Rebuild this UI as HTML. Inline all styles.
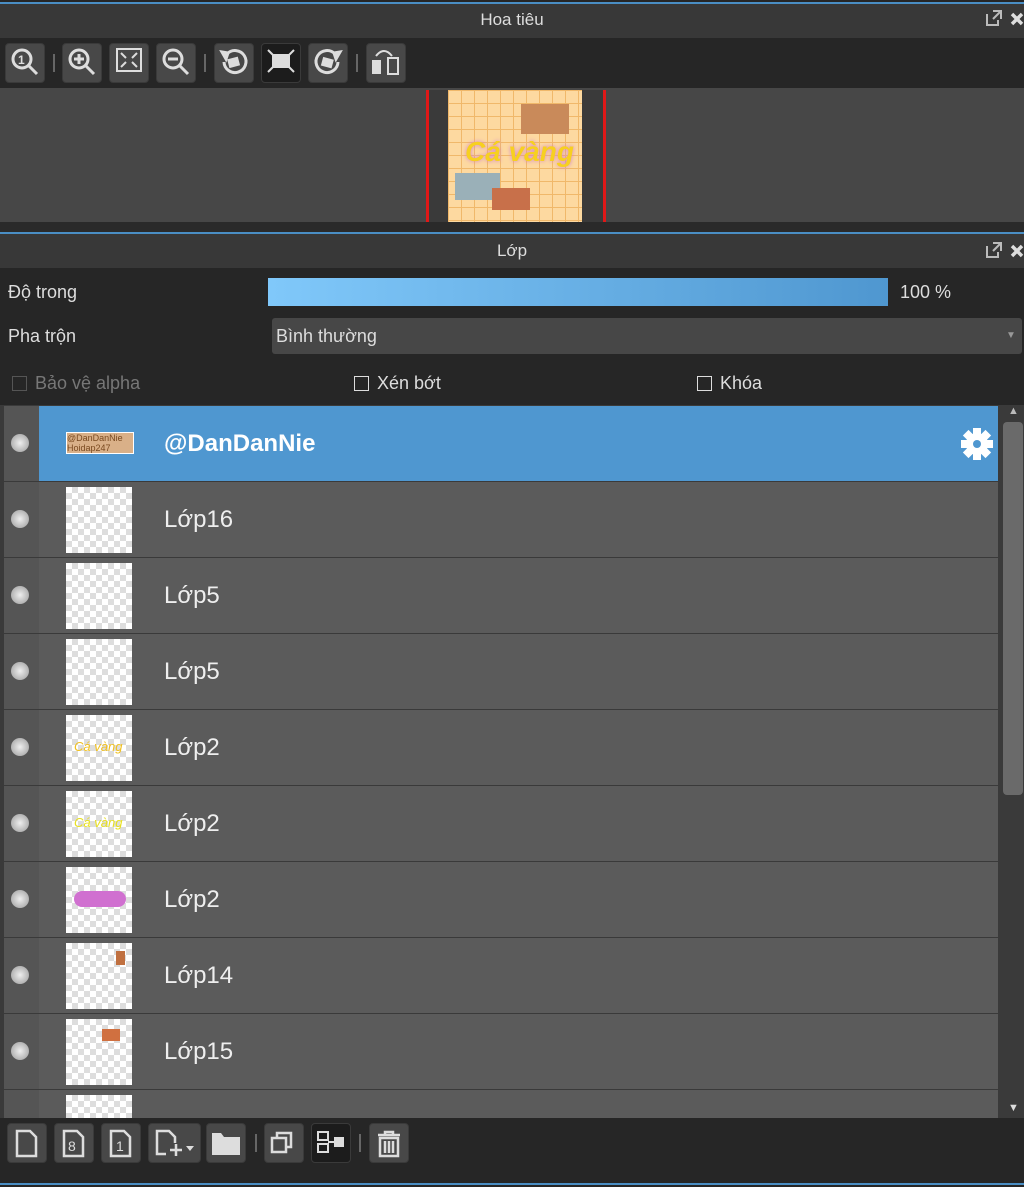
<!DOCTYPE html>
<html><head><meta charset="utf-8"><style>
*{box-sizing:border-box;margin:0;padding:0}
body{width:1024px;height:1187px;background:#262626;font-family:"Liberation Sans","DejaVu Sans",sans-serif;position:relative;overflow:hidden;color:#ddd}
.a{position:absolute}
.title{background:#383838;color:#ddd;font-size:17px;text-align:center}
.btn{position:absolute;width:40px;height:40px;background:#484848;border-radius:4px;border:1px solid #3a3a3a}
.sep{position:absolute;width:2px;height:18px;background:#666}
.row{position:absolute;left:4px;width:994px;height:75px;background:#5b5b5b}
.row .l{position:absolute;left:0;top:0;width:35px;height:75px;background:#555}
.dot{position:absolute;left:7px;top:28px;width:18px;height:18px;border-radius:50%;background:radial-gradient(#eee,#bbb 60%,#999)}
.th{position:absolute;left:62px;top:5px;width:66px;height:66px;background-color:#fff;background-image:linear-gradient(45deg,#ddd 25%,transparent 25%,transparent 75%,#ddd 75%),linear-gradient(45deg,#ddd 25%,transparent 25%,transparent 75%,#ddd 75%);background-size:12px 12px;background-position:0 0,6px 6px}
.nm{position:absolute;left:160px;top:24px;font-size:24px;color:#eee}
.cb{display:inline-block;width:15px;height:15px;border:1.5px solid #ddd;vertical-align:-2px;margin-right:8px}
</style></head><body>
<div class="a" style="left:0;top:2px;width:1024px;height:2px;background:#4a8ec4"></div>
<div class="a title" style="left:0;top:4px;width:1024px;height:34px;line-height:32px">Hoa tiêu</div>
<svg class="a" style="left:984px;top:8px" width="40" height="22" fill="none" stroke="#bbb" stroke-width="2"><path d="M3 6v11h11v-5M9 3h8v8M17 3l-8 8"/><path d="M28 6l10 10M38 6l-10 10" stroke="#ddd" stroke-width="3.5"/></svg>
<div class="a" style="left:0;top:38px;width:1024px;height:50px;background:#262626"></div>
<div class="btn" style="left:5px;top:43px"></div><div class="sep" style="left:53px;top:54px"></div>
<div class="btn" style="left:62px;top:43px"></div><div class="btn" style="left:109px;top:43px"></div><div class="btn" style="left:156px;top:43px"></div>
<div class="sep" style="left:204px;top:54px"></div>
<div class="btn" style="left:214px;top:43px"></div><div class="btn" style="left:261px;top:43px;background:#1c1c1c"></div><div class="btn" style="left:308px;top:43px"></div>
<div class="sep" style="left:356px;top:54px"></div><div class="btn" style="left:366px;top:43px"></div>
<svg class="a" style="left:0;top:38px" width="420" height="50" fill="none" stroke="#ddd" stroke-width="3">
<circle cx="22" cy="21" r="9"/><path d="M29 28l8 8"/><text x="18" y="26" font-size="12" fill="#ddd" stroke="none" font-weight="bold">1</text>
<circle cx="79" cy="21" r="9"/><path d="M86 28l8 8M74 21h10M79 16v10"/>
<rect x="117" y="11" width="24" height="22" stroke-width="2"/><path d="M121 15l5 5M137 15l-5 5M121 29l5-5M137 29l-5-5" stroke-width="2"/>
<circle cx="173" cy="21" r="9"/><path d="M180 28l8 8M168 21h10"/>
<path d="M227 16a11 11 0 1 1-3 8"/><path d="M222 14l6 1-2 6z" fill="#ddd"/><rect x="228" y="20" width="11" height="9" fill="#ddd" stroke="none" transform="rotate(-15 233 24)"/>
<rect x="272" y="16" width="18" height="14" fill="#ddd" stroke="none"/><path d="M268 12l5 5M294 12l-5 5M268 34l5-5M294 34l-5-5" stroke-width="2"/>
<path d="M335 16a11 11 0 1 0 3 8"/><path d="M340 14l-6 1 2 6z" fill="#ddd"/><rect x="322" y="20" width="11" height="9" fill="#ddd" stroke="none" transform="rotate(15 327 24)"/>
<rect x="372" y="22" width="9" height="14" fill="#ddd" stroke="none"/><rect x="388" y="20" width="10" height="16" stroke-width="2"/><path d="M376 18q8-10 16 0" stroke-width="2"/>
</svg>
<div class="a" style="left:0;top:88px;width:1024px;height:134px;background:#474747"></div>
<div class="a" style="left:426px;top:90px;width:180px;height:132px;background:#3a3a3a;border-left:3px solid #e01818;border-right:3px solid #e01818"></div>
<div class="a" style="left:448px;top:90px;width:134px;height:132px;background-color:#fdd9a0;background-image:linear-gradient(#f0b86a 1px,transparent 1px),linear-gradient(90deg,#f0b86a 1px,transparent 1px);background-size:13px 13px"></div>
<div class="a" style="left:521px;top:104px;width:48px;height:30px;background:#c98a5a"></div>
<div class="a" style="left:455px;top:173px;width:45px;height:27px;background:#9ab0b8"></div>
<div class="a" style="left:492px;top:188px;width:38px;height:22px;background:#c8704a"></div>
<div class="a" style="left:465px;top:136px;font-size:28px;font-style:italic;font-weight:bold;color:#f7d020;text-shadow:0 0 4px #d080d0">Cá vàng</div>
<div class="a" style="left:0;top:222px;width:1024px;height:10px;background:#2a2a2a"></div>
<div class="a" style="left:0;top:232px;width:1024px;height:2px;background:#4a8ec4"></div>
<div class="a title" style="left:0;top:234px;width:1024px;height:34px;line-height:34px">Lớp</div>
<svg class="a" style="left:984px;top:240px" width="40" height="22" fill="none" stroke="#bbb" stroke-width="2"><path d="M3 6v11h11v-5M9 3h8v8M17 3l-8 8"/><path d="M28 6l10 10M38 6l-10 10" stroke="#ddd" stroke-width="3.5"/></svg>
<div class="a" style="left:0;top:268px;width:1024px;height:137px;background:#262626"></div>
<div class="a" style="left:8px;top:282px;font-size:18px">Độ trong</div>
<div class="a" style="left:268px;top:278px;width:620px;height:28px;background:linear-gradient(90deg,#80c8fa,#4f97d0)"></div>
<div class="a" style="left:900px;top:282px;font-size:18px">100 %</div>
<div class="a" style="left:8px;top:326px;font-size:18px">Pha trộn</div>
<div class="a" style="left:272px;top:318px;width:750px;height:36px;background:#474747;border-radius:3px"></div>
<div class="a" style="left:276px;top:326px;font-size:18px">Bình thường</div>
<div class="a" style="left:1006px;top:330px;font-size:10px;color:#999">▼</div>
<div class="a" style="left:12px;top:373px;font-size:18px;color:#777"><span class="cb" style="border-color:#555"></span>Bảo vệ alpha</div>
<div class="a" style="left:354px;top:373px;font-size:18px"><span class="cb"></span>Xén bớt</div>
<div class="a" style="left:697px;top:373px;font-size:18px"><span class="cb"></span>Khóa</div>
<div class="a" style="left:0;top:405px;width:1000px;height:713px;background:#3a3a3a"></div>
<div class="row" style="top:406px;background:#4f97d0"><div class="l"></div><div class="dot"></div>
<div class="a" style="left:62px;top:26px;width:68px;height:22px;background:#d9b088;border:1px solid #fff;font-size:9px;color:#7a4a20;line-height:10px">@DanDanNie<br>Hoidap247</div>
<div class="nm" style="font-weight:bold;color:#fff">@DanDanNie</div>
<svg class="a" style="left:955px;top:20px" width="36" height="36" viewBox="0 0 36 36"><g fill="#fff"><circle cx="18" cy="18" r="11"/><rect x="14" y="2" width="8" height="32"/><rect x="2" y="14" width="32" height="8"/><rect x="14" y="2" width="8" height="32" transform="rotate(45 18 18)"/><rect x="14" y="2" width="8" height="32" transform="rotate(-45 18 18)"/></g><circle cx="18" cy="18" r="4" fill="#4f97d0"/></svg></div>
<div class="row" style="top:482px"><div class="l"></div><div class="dot"></div><div class="th"></div><div class="nm">Lớp16</div></div>
<div class="row" style="top:558px"><div class="l"></div><div class="dot"></div><div class="th"></div><div class="nm">Lớp5</div></div>
<div class="row" style="top:634px"><div class="l"></div><div class="dot"></div><div class="th"></div><div class="nm">Lớp5</div></div>
<div class="row" style="top:710px"><div class="l"></div><div class="dot"></div><div class="th"><div class="a" style="left:8px;top:24px;font-size:13px;font-style:italic;color:#f0c020">Cá vàng</div></div><div class="nm">Lớp2</div></div>
<div class="row" style="top:786px"><div class="l"></div><div class="dot"></div><div class="th"><div class="a" style="left:8px;top:24px;font-size:13px;font-style:italic;color:#e8e020">Cá vàng</div></div><div class="nm">Lớp2</div></div>
<div class="row" style="top:862px"><div class="l"></div><div class="dot"></div><div class="th"><div class="a" style="left:8px;top:24px;width:52px;height:16px;border-radius:8px;background:#d070d0"></div></div><div class="nm">Lớp2</div></div>
<div class="row" style="top:938px"><div class="l"></div><div class="dot"></div><div class="th"><div class="a" style="left:50px;top:8px;width:9px;height:14px;background:#c07040"></div></div><div class="nm">Lớp14</div></div>
<div class="row" style="top:1014px"><div class="l"></div><div class="dot"></div><div class="th"><div class="a" style="left:36px;top:10px;width:18px;height:12px;background:#d07040"></div></div><div class="nm">Lớp15</div></div>
<div class="row" style="top:1090px;height:28px"><div class="l" style="height:28px"></div><div class="th" style="height:23px"></div></div>
<div class="a" style="left:1000px;top:405px;width:24px;height:713px;background:#3a3a3a"></div>
<div class="a" style="left:1003px;top:422px;width:20px;height:373px;background:#6a6a6a;border-radius:4px"></div>
<div class="a" style="left:1008px;top:405px;font-size:11px;color:#bbb">▲</div>
<div class="a" style="left:1008px;top:1102px;font-size:11px;color:#ddd">▼</div>
<div class="btn" style="left:7px;top:1123px"></div><div class="btn" style="left:54px;top:1123px"></div><div class="btn" style="left:101px;top:1123px"></div>
<div class="btn" style="left:148px;top:1123px;width:53px"></div><div class="btn" style="left:206px;top:1123px"></div>
<div class="sep" style="left:255px;top:1134px"></div>
<div class="btn" style="left:264px;top:1123px"></div><div class="btn" style="left:311px;top:1123px;background:#1c1c1c"></div>
<div class="sep" style="left:359px;top:1134px"></div><div class="btn" style="left:369px;top:1123px"></div>
<svg class="a" style="left:0;top:1120px" width="420" height="50" fill="none" stroke="#ddd" stroke-width="2.5">
<path d="M17 11h13l6 6v19H17z"/>
<path d="M64 11h13l6 6v19H64z"/><text x="68" y="31" font-size="14" fill="#ddd" stroke="none">8</text>
<path d="M111 11h13l6 6v19h-19z"/><text x="116" y="31" font-size="14" fill="#ddd" stroke="none">1</text>
<path d="M166 34h-9V11h12l6 6v6M170 30h12M176 24v12"/><path d="M186 26h8l-4 5z" fill="#ddd" stroke="none"/>
<path d="M212 13h9l3 4h16v18h-28z" fill="#ddd" stroke="none"/>
<rect x="272" y="18" width="14" height="14"/><path d="M277 18v-5h14v14h-5"/>
<path d="M318 12h10v8h-10zM318 24h10v8h-10zM328 22h6" stroke-width="2"/><rect x="334" y="17" width="10" height="10" fill="#ddd" stroke="none"/>
<path d="M378 15h22M385 15v-3h8v3M380 18h18v18h-18zM385 21v12M389 21v12M393 21v12"/>
</svg>
<div class="a" style="left:0;top:1183px;width:1024px;height:2px;background:#4a8ec4"></div>
</body></html>
